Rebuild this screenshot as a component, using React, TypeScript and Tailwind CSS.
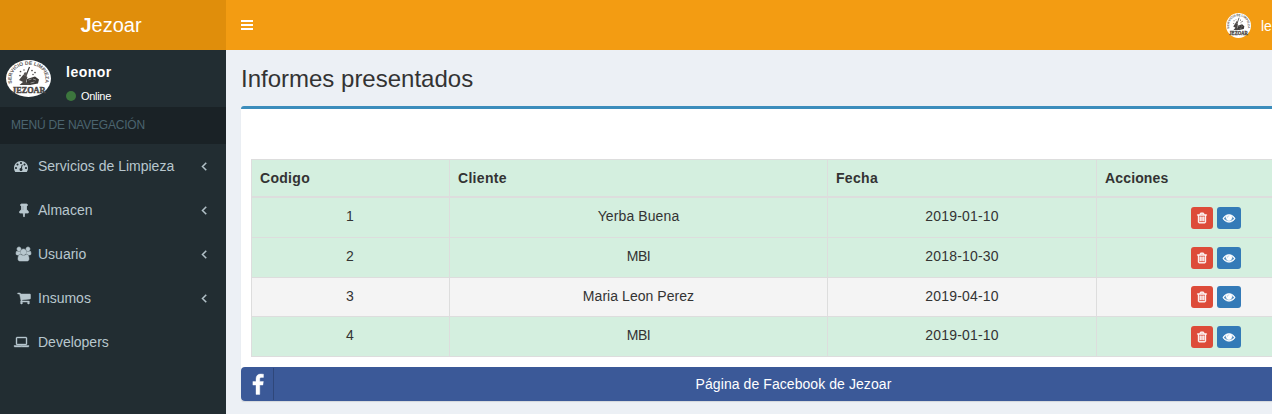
import React from "react";

type IconProps = { d: string; w?: number; className?: string };

function Icon({ d, w = 1792, className = "" }: IconProps) {
  return (
    <svg viewBox={`0 0 ${w} 1792`} className={`block shrink-0 overflow-visible fill-current stroke-current ${className}`} aria-hidden="true">
      <path d={d} />
    </svg>
  );
}

const paths = {
  dashboard:
    "M384 1152q0-53-37.5-90.5t-90.5-37.5-90.5 37.5-37.5 90.5 37.5 90.5 90.5 37.5 90.5-37.5 37.5-90.5zm192-448q0-53-37.5-90.5t-90.5-37.5-90.5 37.5-37.5 90.5 37.5 90.5 90.5 37.5 90.5-37.5 37.5-90.5zm428 481l101-382q6-26-7.5-48.5t-38.5-29.5-48 6.5-30 39.5l-101 382q-60 5-107 43.500t-63 98.500q-20 77 20 146t117 89 146-20 89-117q16-60-6-117t-72-91zm660-33q0-53-37.5-90.5t-90.5-37.5-90.5 37.5-37.5 90.5 37.5 90.5 90.5 37.5 90.5-37.5 37.5-90.5zm-640-640q0-53-37.5-90.5t-90.5-37.5-90.5 37.5-37.5 90.5 37.5 90.5 90.5 37.5 90.5-37.5 37.5-90.5zm448 192q0-53-37.5-90.5t-90.5-37.5-90.5 37.5-37.5 90.5 37.5 90.5 90.5 37.5 90.5-37.5 37.5-90.5zm320 448q0 261-141 483-19 29-54 29h-1402q-35 0-54-29-141-221-141-483 0-182 71-348t191-286 286-191 348-71 348 71 286 191 191 286 71 348z",
  pin: "M800 864v-448q0-14-9-23t-23-9-23 9-9 23v448q0 14 9 23t23 9 23-9 9-23zm672 352q0 26-19 45t-45 19h-429l-51 483q-2 12-10.5 20.500t-20.500 8.500h-1q-27 0-32-27l-76-485h-404q-26 0-45-19t-19-45q0-123 78.500-221.500t177.500-98.500v-512q-52 0-90-38t-38-90 38-90 90-38h640q52 0 90 38t38 90-38 90-90 38v512q99 0 177.500 98.500t78.500 221.500z",
  users:
    "M593 896q-162 5-265 128h-134q-82 0-138-40.5t-56-118.500q0-353 124-353 6 0 43.500 21t97.500 42.500 119 21.500q67 0 133-23-5 37-5 66 0 139 81 256zm1071 637q0 120-73 189.500t-194 69.500h-874q-121 0-194-69.500t-73-189.500q0-53 3.500-103.500t14-109 26.500-108.500 43-97.500 62-81 85.500-53.500 111.500-20q10 0 43 21.500t73 48 107 48 135 21.500 135-21.500 107-48 73-48 43-21.500q61 0 111.500 20t85.500 53.500 62 81 43 97.500 26.500 108.500 14 109 3.500 103.500zm-1024-1277q0 106-75 181t-181 75-181-75-75-181 75-181 181-75 181 75 75 181zm704 384q0 159-112.500 271.500t-271.500 112.500-271.500-112.500-112.500-271.500 112.500-271.500 271.500-112.500 271.500 112.500 112.500 271.500zm576 225q0 78-56 118.500t-138 40.500h-134q-103-123-265-128 81-117 81-256 0-29-5-66 66 23 133 23 59 0 119-21.500t97.500-42.500 43.500-21q124 0 124 353zm-128-609q0 106-75 181t-181 75-181-75-75-181 75-181 181-75 181 75 75 181z",
  cart: "M704 1536q0 52-38 90t-90 38-90-38-38-90 38-90 90-38 90 38 38 90zm896 0q0 52-38 90t-90 38-90-38-38-90 38-90 90-38 90 38 38 90zm128-1088v512q0 24-16.500 42.500t-40.500 21.500l-1044 122q13 60 13 70 0 16-24 64h920q26 0 45 19t19 45-19 45-45 19h-1024q-26 0-45-19t-19-45q0-11 8-31.500t16-36 21.500-40 15.500-29.500l-177-823h-204q-26 0-45-19t-19-45 19-45 45-19h256q16 0 28.500 6.500t19.500 15.500 13 24.500 8 26 5.500 29.500 4.500 26h1201q26 0 45 19t19 45z",
  laptop:
    "M416 1280q-66 0-113-47t-47-113v-704q0-66 47-113t113-47h1088q66 0 113 47t47 113v704q0 66-47 113t-113 47h-1088zm-32-864v704q0 13 9.500 22.500t22.500 9.500h1088q13 0 22.500-9.500t9.500-22.500v-704q0-13-9.500-22.500t-22.500-9.500h-1088q-13 0-22.500 9.500t-9.500 22.500zm1376 928h160v96q0 40-47 68t-113 28h-1600q-66 0-113-28t-47-68v-96h1760zm-720 96q16 0 16-16t-16-16h-160q-16 0-16 16t16 16h160z",
  angle:
    "M1203 544q0 13-10 23l-393 393 393 393q10 10 10 23t-10 23l-50 50q-10 10-23 10t-23-10l-466-466q-10-10-10-23t10-23l466-466q10-10 23-10t23 10l50 50q10 10 10 23z",
  trash:
    "M704 736v576q0 14-9 23t-23 9h-64q-14 0-23-9t-9-23v-576q0-14 9-23t23-9h64q14 0 23 9t9 23zm256 0v576q0 14-9 23t-23 9h-64q-14 0-23-9t-9-23v-576q0-14 9-23t23-9h64q14 0 23 9t9 23zm256 0v576q0 14-9 23t-23 9h-64q-14 0-23-9t-9-23v-576q0-14 9-23t23-9h64q14 0 23 9t9 23zm128 724v-948h-896v948q0 22 7 40.500t14.500 27 10.500 8.500h832q3 0 10.500-8.500t14.500-27 7-40.500zm-672-1076h448l-48-117q-7-9-17-11h-317q-10 2-17 11zm928 32v64q0 14-9 23t-23 9h-96v948q0 83-47 143.500t-113 60.500h-832q-66 0-113-58.500t-47-141.500v-952h-96q-14 0-23-9t-9-23v-64q0-14 9-23t23-9h309l70-167q15-37 54-63t79-26h320q40 0 79 26t54 63l70 167h309q14 0 23 9t9 23z",
  eye: "M1664 960q-152-236-381-353 61 104 61 225 0 185-131.500 316.500t-316.500 131.500-316.500-131.500-131.500-316.500q0-121 61-225-229 117-381 353 133 205 333.500 326.500t434.500 121.500 434.500-121.500 333.500-326.500zm-720-384q0-20-14-34t-34-14q-125 0-214.500 89.500t-89.500 214.500q0 20 14 34t34 14 34-14 14-34q0-86 61-147t147-61q20 0 34-14t14-34zm848 384q0 34-20 69-140 230-376.500 368.500t-499.500 138.500-499.500-139-376.500-368q-20-35-20-69t20-69q140-229 376.500-368t499.500-139 499.500 139 376.500 368q20 35 20 69z",
  facebook:
    "M1343 12v264h-157q-86 0-116 36t-30 108v189h293l-39 296h-254v759h-306v-759h-255v-296h255v-218q0-186 104-288.500t277-102.500q147 0 228 12z",
};

function Logo({ id, className }: { id: string; className: string }) {
  return (
    <svg viewBox="0 0 90 74" preserveAspectRatio="none" className={`block shrink-0 ${className}`} aria-hidden="true">
      <defs>
        <path id={`${id}-arc`} d="M12 47 C1 -3 89 -3 78 47" />
        <clipPath id={`${id}-clip`}>
          <ellipse cx="45" cy="37" rx="45" ry="37" />
        </clipPath>
      </defs>
      <ellipse cx="45" cy="37" rx="45" ry="37" fill="#fff" />
      <text fontSize="10" fontWeight="700" fill="#5b5654" fontFamily="Liberation Sans, sans-serif">
        <textPath href={`#${id}-arc`} textLength="116" lengthAdjust="spacingAndGlyphs">
          SERVICIO DE LIMPIEZA
        </textPath>
      </text>
      <g clipPath={`url(#${id}-clip)`}>
        <path d="M47 14 L38 36" stroke="#3b3836" strokeWidth="2.400" fill="none" />
        <path d="M26 40 L35 29 L43 34 L40 44 L50 50 H27 L34 44 Z" fill="#4a4644" />
        <path d="M42 38 L58 33 L66 39 L64 47 L48 50 L41 45 Z" fill="#3b3836" />
        <path d="M45 40 l6 -2 M54 38 l6 2 M49 46 l8 -2" stroke="#aaa" strokeWidth="1.500" />
        <circle cx="39" cy="28" r="3.500" fill="#5b5654" />
        <g fill="#4a4644">
          <circle cx="29" cy="23" r="1.700" />
          <circle cx="28" cy="31" r="1.700" />
          <circle cx="52" cy="21" r="1.700" />
          <circle cx="58" cy="25" r="1.700" />
          <circle cx="54" cy="29" r="1.500" />
          <circle cx="36" cy="20" r="1.400" />
        </g>
      </g>
      <text x="12" y="65" textLength="67" lengthAdjust="spacingAndGlyphs" fontSize="18" fontWeight="700" fill="#4a4644" stroke="#4a4644" strokeWidth="1" fontFamily="Liberation Serif, serif">
        JEZOAR
      </text>
    </svg>
  );
}

const menu = [
  { label: "Servicios de Limpieza", icon: paths.dashboard, w: 1792, box: "pl-[14px]", size: "w-[14px] h-[14px] stroke-0", arrow: true },
  { label: "Almacen", icon: paths.pin, w: 1792, box: "pl-[17px]", size: "w-[14px] h-[14px] stroke-[100]", arrow: true },
  { label: "Usuario", icon: paths.users, w: 1920, box: "pl-[16px]", size: "w-[15px] h-[14px] stroke-[70]", arrow: true },
  { label: "Insumos", icon: paths.cart, w: 1792, box: "pl-[17px]", size: "w-[14px] h-[14px] stroke-[60]", arrow: true },
  { label: "Developers", icon: paths.laptop, w: 1920, box: "pl-[14px]", size: "w-[15px] h-[14px] stroke-[50]", arrow: false },
];

const rows = [
  { id: "1", client: "Yerba Buena", date: "2019-01-10", style: "h-10 bg-[#d4efdf]", track: "tracking-[0.1px]", pad: "pt-[9px]" },
  { id: "2", client: "MBI", date: "2018-10-30", style: "h-10 bg-[#d4efdf]", track: "tracking-[-0.4px]", pad: "pt-[9px]" },
  { id: "3", client: "Maria Leon Perez", date: "2019-04-10", style: "h-[39px] bg-[#f4f4f4]", track: "tracking-[0.05px]", pad: "pt-2" },
  { id: "4", client: "MBI", date: "2019-01-10", style: "h-10 bg-[#d4efdf]", track: "tracking-[-0.4px]", pad: "pt-[9px]" },
];

const columns = "grid grid-cols-[198px_378px_269px_238px] border-l border-[#ddd]";
const cell = "border-r border-[#ddd]";

export default function App() {
  return (
    <div className="flex h-[414px] w-full flex-col overflow-hidden bg-[#ecf0f5] font-['Liberation_Sans',Arial,sans-serif] text-sm text-[#333]">
      <header className="flex h-[50px] shrink-0 bg-[#f39c12] text-white">
        <div className="w-[226px] shrink-0 bg-[#e08e0b] pr-1 text-center text-xl leading-[50px]">
          <b>J</b>ezoar
        </div>
        <div className="flex grow items-center pl-[15px]">
          <div className="flex w-3 flex-col gap-[2px]">
            <span className="h-[2px] bg-white" />
            <span className="h-[2px] bg-white" />
            <span className="h-[2px] bg-white" />
          </div>
        </div>
        <div className="flex w-[46px] shrink-0 items-center gap-[10px] overflow-hidden pt-px whitespace-nowrap">
          <Logo id="top" className="h-[25px] w-[25px]" />
          <span>leonor</span>
        </div>
      </header>

      <div className="flex min-h-0 grow">
        <aside className="w-[226px] shrink-0 bg-[#222d32] text-[#b8c7ce]">
          <div className="flex h-[57px] pl-[6px] pt-[10px]">
            <Logo id="side" className="h-[37px] w-[45px]" />
            <div className="pl-[15px] pt-[2px] text-white">
              <p className="font-semibold leading-5 tracking-[0.5px]">leonor</p>
              <p className="mt-[6px] flex items-center text-[11px] leading-4 tracking-[-0.3px]">
                <span className="mr-[5px] h-[10px] w-[10px] rounded-full bg-[#3c763d]" />
                Online
              </p>
            </div>
          </div>
          <div className="h-[37px] bg-[#1a2226] pl-[11px] text-xs leading-9 tracking-[-0.22px] text-[#4b646f]">MENÚ DE NAVEGACIÓN</div>
          <nav>
            {menu.map((m) => (
              <a key={m.label} className="flex h-11 items-center">
                <span className={`w-[38px] shrink-0 ${m.box}`}>
                  <Icon d={m.icon} w={m.w} className={m.size} />
                </span>
                <span className="grow">{m.label}</span>
                {m.arrow && <Icon d={paths.angle} className="mr-[15px] h-[14px] w-[14px] stroke-[60]" />}
              </a>
            ))}
          </nav>
        </aside>

        <main className="min-w-0 grow overflow-hidden pl-[15px]">
          <div className="w-[1104px]">
            <h1 className="h-14 pt-[14px] text-2xl leading-[30px]">Informes presentados</h1>
            <section className="rounded-[3px] border-t-[3px] border-[#3c8dbc] bg-white shadow-[0_1px_1px_rgba(0,0,0,0.1)]">
              <div className="px-[10px] pb-[10px] pt-[50px]">
                <div className={`${columns} h-[39px] border-t border-b-2 bg-[#d4efdf] font-bold leading-9 tracking-[0.3px]`}>
                  <div className={`${cell} pl-2`}>Codigo</div>
                  <div className={`${cell} pl-2`}>Cliente</div>
                  <div className={`${cell} pl-2`}>Fecha</div>
                  <div className={`${cell} pl-2 tracking-[0.15px]`}>Acciones</div>
                </div>
                {rows.map((r) => (
                  <div key={r.id} className={`${columns} ${r.style} border-b text-center leading-9`}>
                    <div className={`${cell} pr-px`}>{r.id}</div>
                    <div className={`${cell} ${r.track}`}>{r.client}</div>
                    <div className={`${cell} tracking-[0.2px]`}>{r.date}</div>
                    <div className={`${cell} ${r.pad} flex justify-center gap-1 text-white`}>
                      <span className="flex h-[22px] w-[22px] items-center justify-center rounded-[3px] bg-[#dd4b39]">
                        <Icon d={paths.trash} className="h-3 w-3 stroke-[70]" />
                      </span>
                      <span className="flex h-[22px] w-6 items-center justify-center rounded-[3px] bg-[#337ab7]">
                        <Icon d={paths.eye} className="h-3 w-3 stroke-[90]" />
                      </span>
                    </div>
                  </div>
                ))}
              </div>
              <a className="flex h-[34px] items-stretch rounded-[4px] bg-[#3b5998] text-white">
                <span className="my-px flex w-[33px] items-center justify-center border-r border-[#2f477a] pl-[2px] pt-[2px]">
                  <Icon d={paths.facebook} className="h-[22px] w-[22px] stroke-[30]" />
                </span>
                <span className="grow pr-[32px] text-center leading-[34px] tracking-[0.07px]">Página de Facebook de Jezoar</span>
              </a>
            </section>
          </div>
        </main>
      </div>
    </div>
  );
}
